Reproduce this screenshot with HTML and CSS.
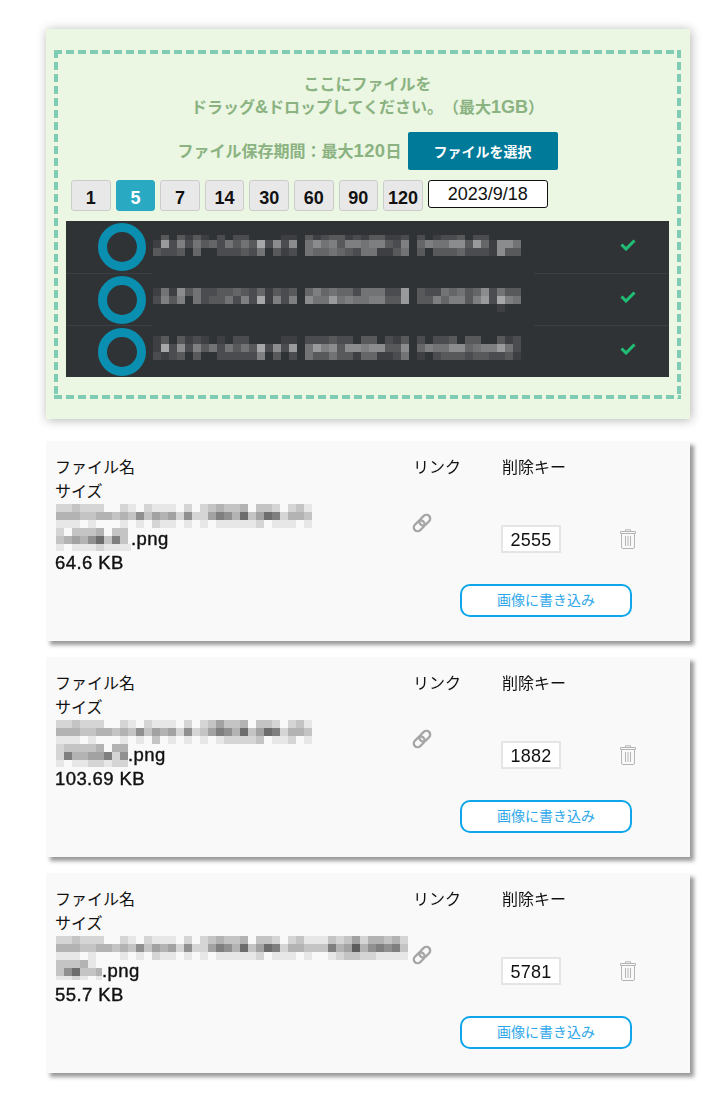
FILE: index.html
```html
<!DOCTYPE html>
<html lang="ja">
<head>
    <meta charset="UTF-8">
    <meta name="viewport" content="width=device-width, initial-scale=1.0">
    <title>ファイル転送</title>
    <link rel="stylesheet" href="styles.css">
</head>
<body>
    <div class="upload-panel">
        <div class="drop-zone">
            <p class="drop-text">ここにファイルを<br>ドラッグ<span class="latin">&amp;</span>ドロップしてください。（最大<span class="latin">1GB</span>）</p>
            <div class="select-row">
                <span class="period-label">ファイル保存期間：最大<span class="latin">120</span>日</span>
                <button class="select-btn">ファイルを選択</button>
            </div>
            <div class="days">
                <span class="day">1</span>
                <span class="day active">5</span>
                <span class="day">7</span>
                <span class="day">14</span>
                <span class="day">30</span>
                <span class="day">60</span>
                <span class="day">90</span>
                <span class="day">120</span>
                <span class="date-box">2023/9/18</span>
            </div>
            <div class="queue">
                <div class="queue-row">
                    <span class="ring"></span>
                    <canvas class="mosaic on-dark" width="381" height="52" data-top="14" data-heights="5,8,8"
                        data-cells="0303131020220000110312331213311202012230220000|1826253425353927270575636656632604655773841775|3223040022232503120544543255113503033342221733"></canvas>
                    <svg class="check" width="16" height="12" viewBox="0 0 16 12"><path d="M1.5 5.5 L6 10 L14.5 1.5"/></svg>
                </div>
                <div class="queue-row">
                    <span class="ring"></span>
                    <canvas class="mosaic on-dark" width="381" height="52" data-top="15" data-heights="8,8,8"
                        data-cells="1517352233432413230464544255522803225453472533|2636052335262916260755856556633803364663682965|0000000000000000000000000000000000000000000100"></canvas>
                    <svg class="check" width="16" height="12" viewBox="0 0 16 12"><path d="M1.5 5.5 L6 10 L14.5 1.5"/></svg>
                </div>
                <div class="queue-row">
                    <span class="ring"></span>
                    <canvas class="mosaic on-dark" width="381" height="52" data-top="11" data-heights="8,8,8"
                        data-cells="1303121010220000110222322033021302022303300312|1927263525353927280586737767733704655774566852|2123030022222603020533533144112501023332332231"></canvas>
                    <svg class="check" width="16" height="12" viewBox="0 0 16 12"><path d="M1.5 5.5 L6 10 L14.5 1.5"/></svg>
                </div>
            </div>
        </div>
    </div>

    <div class="file-card">
        <div class="file-info">
            <div class="label">ファイル名</div>
            <div class="label">サイズ</div>
            <div class="file-name">
                <canvas class="mosaic" width="256" height="24" data-heights="8,8,8"
                    data-cells="22322200210211102023433403320231|44433443436354526225764835872443|11101000101021101010111112011101"></canvas>
                <div class="name-end">
                    <canvas class="mosaic" width="75" height="23" data-heights="8,8,7"
                        data-cells="203334033|345468373|1011121111"></canvas>
                    <span class="strong">.png</span>
                </div>
            </div>
            <div class="strong">64.6 KB</div>
        </div>
        <div class="link-col">
            <div class="label">リンク</div>
            <svg class="link-icon" width="20" height="20" viewBox="0 0 20 20"><g transform="rotate(-45 10 10)"><rect x="0" y="6.2" width="12" height="7.6" rx="3.8"/><rect x="8" y="6.2" width="12" height="7.6" rx="3.8"/></g></svg>
        </div>
        <div class="key-col">
            <div class="label">削除キー</div>
            <div class="key-row">
                <span class="key-box">2555</span>
                <svg class="trash" width="16" height="20" viewBox="0 0 16 20"><path d="M5.5 2.5 V0.8 H10.5 V2.5 M0.5 2.5 H15.5 V4.5 H0.5 Z M1.5 4.5 V18 Q1.5 19.5 3 19.5 H13 Q14.5 19.5 14.5 18 V4.5 M5.5 7 V17 M8 7 V17 M10.5 7 V17"/></svg>
            </div>
        </div>
        <button class="write-btn">画像に書き込み</button>
    </div>

    <div class="file-card">
        <div class="file-info">
            <div class="label">ファイル名</div>
            <div class="label">サイズ</div>
            <div class="file-name">
                <canvas class="mosaic" width="256" height="24" data-heights="8,8,8"
                    data-cells="22322200210211102023533403320231|44433443436354526235764835872443|11101000101030101010122223011201"></canvas>
                <div class="name-end">
                    <canvas class="mosaic" width="72" height="23" data-heights="8,8,7"
                        data-cells="233334044|274455726|101122122"></canvas>
                    <span class="strong">.png</span>
                </div>
            </div>
            <div class="strong">103.69 KB</div>
        </div>
        <div class="link-col">
            <div class="label">リンク</div>
            <svg class="link-icon" width="20" height="20" viewBox="0 0 20 20"><g transform="rotate(-45 10 10)"><rect x="0" y="6.2" width="12" height="7.6" rx="3.8"/><rect x="8" y="6.2" width="12" height="7.6" rx="3.8"/></g></svg>
        </div>
        <div class="key-col">
            <div class="label">削除キー</div>
            <div class="key-row">
                <span class="key-box">1882</span>
                <svg class="trash" width="16" height="20" viewBox="0 0 16 20"><path d="M5.5 2.5 V0.8 H10.5 V2.5 M0.5 2.5 H15.5 V4.5 H0.5 Z M1.5 4.5 V18 Q1.5 19.5 3 19.5 H13 Q14.5 19.5 14.5 18 V4.5 M5.5 7 V17 M8 7 V17 M10.5 7 V17"/></svg>
            </div>
        </div>
        <button class="write-btn">画像に書き込み</button>
    </div>

    <div class="file-card">
        <div class="file-info">
            <div class="label">ファイル名</div>
            <div class="label">サイズ</div>
            <div class="file-name">
                <canvas class="mosaic" width="352" height="24" data-heights="8,8,8"
                    data-cells="22322200210211102023433403320231113235244342|44433443436354526225764835872443337459467673|11101000101021101010111112011101001233221111"></canvas>
                <div class="name-end">
                    <canvas class="mosaic" width="46" height="23" data-heights="8,8,4"
                        data-cells="333410|368334|112101"></canvas>
                    <span class="strong">.png</span>
                </div>
            </div>
            <div class="strong">55.7 KB</div>
        </div>
        <div class="link-col">
            <div class="label">リンク</div>
            <svg class="link-icon" width="20" height="20" viewBox="0 0 20 20"><g transform="rotate(-45 10 10)"><rect x="0" y="6.2" width="12" height="7.6" rx="3.8"/><rect x="8" y="6.2" width="12" height="7.6" rx="3.8"/></g></svg>
        </div>
        <div class="key-col">
            <div class="label">削除キー</div>
            <div class="key-row">
                <span class="key-box">5781</span>
                <svg class="trash" width="16" height="20" viewBox="0 0 16 20"><path d="M5.5 2.5 V0.8 H10.5 V2.5 M0.5 2.5 H15.5 V4.5 H0.5 Z M1.5 4.5 V18 Q1.5 19.5 3 19.5 H13 Q14.5 19.5 14.5 18 V4.5 M5.5 7 V17 M8 7 V17 M10.5 7 V17"/></svg>
            </div>
        </div>
        <button class="write-btn">画像に書き込み</button>
    </div>

    <script src="mosaic.js"></script>
</body>
</html>
```

FILE: styles.css
```css
body {
    margin: 0;
    padding: 29px 28px 30px 46px;
    background: #fff;
    color: #111;
    font-family: "Liberation Sans", "Noto Sans CJK JP", sans-serif;
    font-size: 16px;
    line-height: 24px;
    text-spacing-trim: space-all;
}
.upload-panel {
    height: 390px;
    box-sizing: border-box;
    padding: 21px 9px 20px 8px;
    background: #ebf6e3;
    box-shadow: 1px 1px 10px rgba(0, 0, 0, 0.3);
}
.drop-zone {
    height: 349px;
    box-sizing: border-box;
    padding: 23px 12px 0;
    background:
        repeating-linear-gradient(90deg, #80cbb3 0 8px, transparent 8px 12px) top / 100% 4px no-repeat,
        repeating-linear-gradient(90deg, #80cbb3 0 8px, transparent 8px 12px) bottom / 100% 4px no-repeat,
        repeating-linear-gradient(180deg, #80cbb3 0 8px, transparent 8px 12px) left / 4px 100% no-repeat,
        repeating-linear-gradient(180deg, #80cbb3 0 8px, transparent 8px 12px) right / 4px 100% no-repeat;
}
.drop-text {
    margin: 0;
    text-align: center;
    color: #8ab381;
    font-weight: bold;
    line-height: 23px;
}
.latin {
    font-size: 18px;
}
.select-row {
    display: flex;
    justify-content: center;
    align-items: center;
    gap: 6px;
    margin-top: 13px;
}
.period-label {
    color: #8ab381;
    font-weight: bold;
}
.period-label .latin {
    font-size: 18.5px;
    letter-spacing: 0.4px;
}
.select-btn {
    width: 150px;
    height: 38px;
    border: none;
    border-radius: 2px;
    background: #007a99;
    color: #fff;
    font: bold 14px "Liberation Sans", "Noto Sans CJK JP", sans-serif;
}
.days {
    display: flex;
    align-items: flex-start;
    gap: 5px;
    margin-top: 10px;
    padding-left: 5px;
}
.day {
    width: 39.6px;
    height: 31px;
    box-sizing: border-box;
    border: 1px solid #ccc;
    border-radius: 3px;
    background: #e8e8e8;
    font-size: 18px;
    font-weight: bold;
    line-height: 34px;
    text-align: center;
}
.day.active {
    border-color: #2aa9c3;
    background: #2aa9c3;
    color: #fff;
}
.date-box {
    width: 120px;
    height: 28px;
    box-sizing: border-box;
    border: 1px solid #111;
    border-radius: 3px;
    background: #fff;
    font-size: 18px;
    line-height: 26px;
    text-align: center;
}
.queue {
    margin-top: 10px;
    background: #303336;
}
.queue-row {
    display: flex;
    align-items: center;
    height: 52px;
    box-sizing: border-box;
    padding: 0 33px 0 32px;
}
.queue-row + .queue-row {
    border-top: 1px solid #3c3f42;
}
.ring {
    width: 48px;
    height: 48px;
    box-sizing: border-box;
    border: 9px solid #0a8fb0;
    border-radius: 50%;
}
.queue-row .mosaic {
    align-self: flex-start;
    margin-left: 7px;
}
.queue-row + .queue-row .mosaic {
    margin-top: -1px;
}
.check {
    margin: 0 0 5px auto;
    fill: none;
    stroke: #1fbf75;
    stroke-width: 3;
}
.file-card {
    display: grid;
    grid-template-columns: 358px 89px 1fr;
    align-content: start;
    box-sizing: border-box;
    height: 200px;
    margin-top: 16px;
    padding: 14px 9px 0;
    background: #f9f9f9;
    box-shadow: 4px 4px 4px rgba(0, 0, 0, 0.4);
}
.upload-panel + .file-card {
    margin-top: 22px;
}
.file-info {
    height: 120px;
}
.label {
    height: 24px;
    line-height: 26px;
}
.file-name .mosaic {
    display: block;
    margin: 1px 0 -1px 1px;
}
.name-end {
    display: flex;
    align-items: flex-start;
}
.strong {
    font-size: 18.5px;
    letter-spacing: 0.4px;
    -webkit-text-stroke: 0.4px #111;
}
.link-icon {
    display: block;
    margin: 34px 0 0 -1px;
    fill: none;
    stroke: #a5a5a5;
    stroke-width: 2.3;
}
.key-row {
    display: flex;
    align-items: center;
    gap: 59px;
    margin: 46px 0 0 -1px;
}
.key-box {
    width: 60px;
    height: 28px;
    box-sizing: border-box;
    border: 2px solid #e5e5e5;
    background: #fff;
    font-size: 18px;
    letter-spacing: 0.3px;
    line-height: 26px;
    text-align: center;
}
.trash {
    fill: none;
    stroke: #b5b5b5;
    stroke-width: 1;
}
.write-btn {
    grid-column: 2 / 4;
    justify-self: start;
    width: 172px;
    height: 33px;
    margin: 9px 0 0 47px;
    padding-bottom: 4px;
    border: 2px solid #0ea5ea;
    border-radius: 10px;
    background: #fff;
    color: #2ea7e8;
    font: 14px "Liberation Sans", "Noto Sans CJK JP", sans-serif;
}
```

FILE: mosaic.js
```js
// draws the blurred-out file names from rows of brightness digits
document.querySelectorAll('.mosaic').forEach(function (canvas) {
    const ctx = canvas.getContext('2d');
    const heights = canvas.dataset.heights.split(',').map(Number);
    const onDark = canvas.classList.contains('on-dark');
    let y = Number(canvas.dataset.top || 0);

    if (onDark) {
        ctx.fillStyle = '#303336';
        ctx.fillRect(0, 0, canvas.width, canvas.height);
    }

    canvas.dataset.cells.split('|').forEach(function (row, i) {
        for (let c = 0; c < row.length; c++) {
            const level = Number(row[c]);
            if (level === 0) continue;
            ctx.fillStyle = onDark
                ? 'rgba(255, 255, 255, ' + level * 0.063 + ')'
                : 'rgba(0, 0, 0, ' + level * 0.07 + ')';
            ctx.fillRect(c * 8, y, 8, heights[i]);
        }
        y += heights[i];
    });
});
```
